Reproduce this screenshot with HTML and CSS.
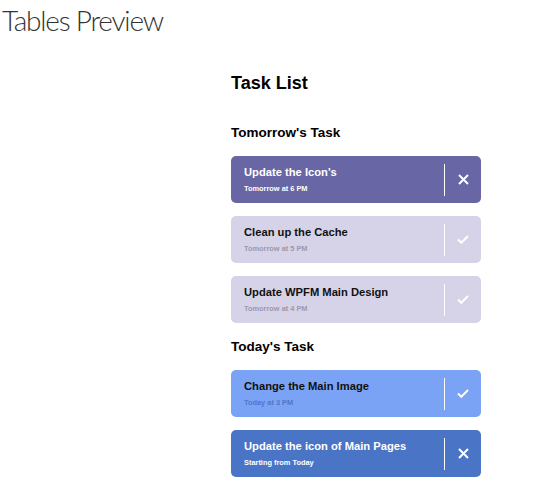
FILE: index.html
```html
<!DOCTYPE html>
<html lang="en">
<head>
<meta charset="utf-8">
<title>Tables Preview</title>
<link rel="stylesheet" href="styles.css">
</head>
<body>
<h1 class="page-title">Tables Preview</h1>
<main class="task-list">
  <h2 class="list-title">Task List</h2>

  <h3 class="group-title first">Tomorrow's Task</h3>
  <div class="card card-purple">
    <div class="card-text">
      <div class="card-name">Update the Icon's</div>
      <div class="card-sub">Tomorrow at 6 PM</div>
    </div>
    <div class="card-divider"></div>
    <div class="card-icon">
      <svg width="11" height="11" viewBox="0 0 11 11"><path d="M1 1L10 10M10 1L1 10" stroke="#fff" stroke-width="2" fill="none"/></svg>
    </div>
  </div>
  <div class="card card-lilac">
    <div class="card-text">
      <div class="card-name">Clean up the Cache</div>
      <div class="card-sub">Tomorrow at 5 PM</div>
    </div>
    <div class="card-divider"></div>
    <div class="card-icon">
      <svg width="12" height="9" viewBox="0 0 12 9"><path d="M1 4.5L4.3 7.8L11 1" stroke="#fff" stroke-width="2" fill="none"/></svg>
    </div>
  </div>
  <div class="card card-lilac">
    <div class="card-text">
      <div class="card-name">Update WPFM Main Design</div>
      <div class="card-sub">Tomorrow at 4 PM</div>
    </div>
    <div class="card-divider"></div>
    <div class="card-icon">
      <svg width="12" height="9" viewBox="0 0 12 9"><path d="M1 4.5L4.3 7.8L11 1" stroke="#fff" stroke-width="2" fill="none"/></svg>
    </div>
  </div>

  <h3 class="group-title">Today's Task</h3>
  <div class="card card-sky">
    <div class="card-text">
      <div class="card-name">Change the Main Image</div>
      <div class="card-sub">Today at 3 PM</div>
    </div>
    <div class="card-divider"></div>
    <div class="card-icon">
      <svg width="12" height="9" viewBox="0 0 12 9"><path d="M1 4.5L4.3 7.8L11 1" stroke="#fff" stroke-width="2" fill="none"/></svg>
    </div>
  </div>
  <div class="card card-blue">
    <div class="card-text">
      <div class="card-name">Update the icon of Main Pages</div>
      <div class="card-sub">Starting from Today</div>
    </div>
    <div class="card-divider"></div>
    <div class="card-icon">
      <svg width="11" height="11" viewBox="0 0 11 11"><path d="M1 1L10 10M10 1L1 10" stroke="#fff" stroke-width="2" fill="none"/></svg>
    </div>
  </div>
</main>
</body>
</html>
```

FILE: styles.css
```css
html, body {
  margin: 0;
  padding: 0;
  background: #fff;
}

.page-title {
  margin: 0;
  padding: 3px 0 0 2px;
  font-family: Lato, "Open Sans", sans-serif;
  font-weight: 300;
  font-size: 28px;
  line-height: 34px;
  letter-spacing: -1.2px;
  color: #333;
}

.task-list {
  width: 250px;
  margin-left: 231px;
  display: flex;
  flex-direction: column;
  font-family: "Liberation Sans", Arial, sans-serif;
}

.list-title {
  margin: 36px 0 0 0;
  font-size: 18px;
  line-height: 21px;
  font-weight: bold;
  color: #000;
}

.group-title {
  margin: 3px 0 15px 0;
  font-size: 13.5px;
  line-height: 16px;
  font-weight: bold;
  color: #000;
}

.group-title.first {
  margin-top: 31px;
}

.card {
  display: flex;
  align-items: center;
  height: 47px;
  border-radius: 5px;
  margin-bottom: 13px;
}

.card:last-child {
  margin-bottom: 0;
}

.card-text {
  flex: 1;
  align-self: stretch;
  padding: 10px 0 0 13px;
}

.card-name {
  font-size: 11.2px;
  line-height: 13px;
  font-weight: bold;
}

.card-sub {
  margin-top: 5px;
  font-size: 7.4px;
  line-height: 9px;
  font-weight: bold;
}

.card-divider {
  width: 1.5px;
  height: 32px;
  background: #fff;
}

.card-icon {
  width: 36px;
  display: flex;
  justify-content: center;
  align-items: center;
}

.card-purple {
  background: #6866a4;
}
.card-purple .card-name,
.card-purple .card-sub {
  color: #fff;
}

.card-lilac {
  background: #d6d3e9;
}
.card-lilac .card-name {
  color: #111;
}
.card-lilac .card-sub {
  color: #9a98ae;
}

.card-sky {
  background: #7aa3f6;
}
.card-sky .card-name {
  color: #111;
}
.card-sky .card-sub {
  color: #5275c8;
}

.card-blue {
  background: #4a74c6;
}
.card-blue .card-name,
.card-blue .card-sub {
  color: #fff;
}
```
